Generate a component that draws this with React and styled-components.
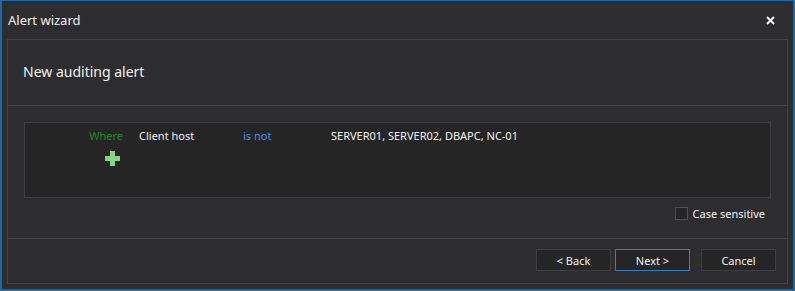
import React from 'react';
import styled, { createGlobalStyle } from 'styled-components';

const GlobalStyle = createGlobalStyle`
    html, body {
        margin: 0;
        padding: 0;
        background: #2d2d30;
    }
    * {
        box-sizing: border-box;
    }
`;

//=-=-=-=-=-=-=-=-=-=-=-= STYLES =-=-=-=-=-=-=-=-=-=-=-=
const Window = styled.div`
    width: 795px;
    height: 291px;
    display: flex;
    flex-direction: column;
    background: #2d2d30;
    border: 2px solid #1b6aa8;
    border-top-width: 1px;
    font-family: "Noto Sans", "Open Sans", sans-serif;
    color: #f1f1f1;
`;

const TitleBar = styled.div`
    height: 38px;
    display: flex;
    align-items: center;
    justify-content: space-between;
    padding: 0 17px 0 6px;
    font-size: 13px;
`;

const CloseButton = styled.span`
    display: flex;
    align-items: center;
    justify-content: center;
    width: 12px;
    height: 12px;
`;

const Panel = styled.div`
    flex: 1;
    margin: 0 5px 5px 5px;
    border: 1px solid #434346;
    display: flex;
    flex-direction: column;
`;

const Header = styled.div`
    height: 66px;
    display: flex;
    align-items: center;
    padding-left: 15px;
    padding-bottom: 2px;
    font-size: 14px;
    border-bottom: 1px solid #434346;
`;

const Body = styled.div`
    padding: 16px 16px 0 16px;
    border-bottom: 1px solid #434346;
    height: 133px;
`;

const ConditionBox = styled.div`
    height: 76px;
    background: #252526;
    border: 1px solid #3f3f42;
    padding-top: 4px;
    display: grid;
    grid-template-columns: 114px 104px 88px 1fr;
    grid-auto-rows: min-content;
    font-size: 11px;
`;

const Cell = styled.div`
    height: 18px;
    line-height: 18px;
    color: ${p => p.$color || '#f1f1f1'};
    text-align: ${p => p.$right ? 'right' : 'left'};
    padding-right: ${p => p.$right ? '16px' : '0'};
`;

const AddCell = styled.div`
    grid-column: 1;
    display: flex;
    justify-content: flex-end;
    padding: 6px 19px 0 0;
`;

const OptionsRow = styled.div`
    display: flex;
    justify-content: flex-end;
    align-items: center;
    padding: 8px 6px 0 0;
    font-size: 11px;
    gap: 5px;
`;

const Checkbox = styled.span`
    width: 13px;
    height: 13px;
    background: #252526;
    border: 1px solid #505054;
`;

const Footer = styled.div`
    flex: 1;
    display: flex;
    justify-content: flex-end;
    align-items: center;
    padding: 0 11px 2px 0;
`;

const Button = styled.button`
    width: 75px;
    height: 22px;
    margin-left: ${p => p.$gap || 0}px;
    background: #252526;
    border: 1px solid ${p => p.$primary ? '#2f7fc1' : '#3f3f42'};
    color: #f1f1f1;
    font-family: "Noto Sans", "Open Sans", sans-serif;
    font-size: 11px;
    padding: 0;
`;

function App() {
    return (
        <>
            <GlobalStyle />
            <Window>
                <TitleBar>
                    <span>Alert wizard</span>
                    <CloseButton>
                        <svg width="9" height="9" viewBox="0 0 9 9">
                            <path d="M1 1 L8 8 M8 1 L1 8" stroke="#ffffff" strokeWidth="1.8" />
                        </svg>
                    </CloseButton>
                </TitleBar>

                <Panel>
                    <Header>New auditing alert</Header>

                    <Body>
                        <ConditionBox>
                            <Cell $right $color="#1f8a1f">Where</Cell>
                            <Cell>Client host</Cell>
                            <Cell $color="#3a8ee6">is not</Cell>
                            <Cell>SERVER01, SERVER02, DBAPC, NC-01</Cell>
                            <AddCell>
                                <svg width="15" height="15" viewBox="0 0 15 15">
                                    <path d="M5 0 H10 V5 H15 V10 H10 V15 H5 V10 H0 V5 H5 Z" fill="#86d486" />
                                </svg>
                            </AddCell>
                        </ConditionBox>

                        <OptionsRow>
                            <Checkbox />
                            <span>Case sensitive</span>
                        </OptionsRow>
                    </Body>

                    <Footer>
                        <Button>&lt; Back</Button>
                        <Button $primary $gap={4}>Next &gt;</Button>
                        <Button $gap={11}>Cancel</Button>
                    </Footer>
                </Panel>
            </Window>
        </>
    );
}

export default App;
